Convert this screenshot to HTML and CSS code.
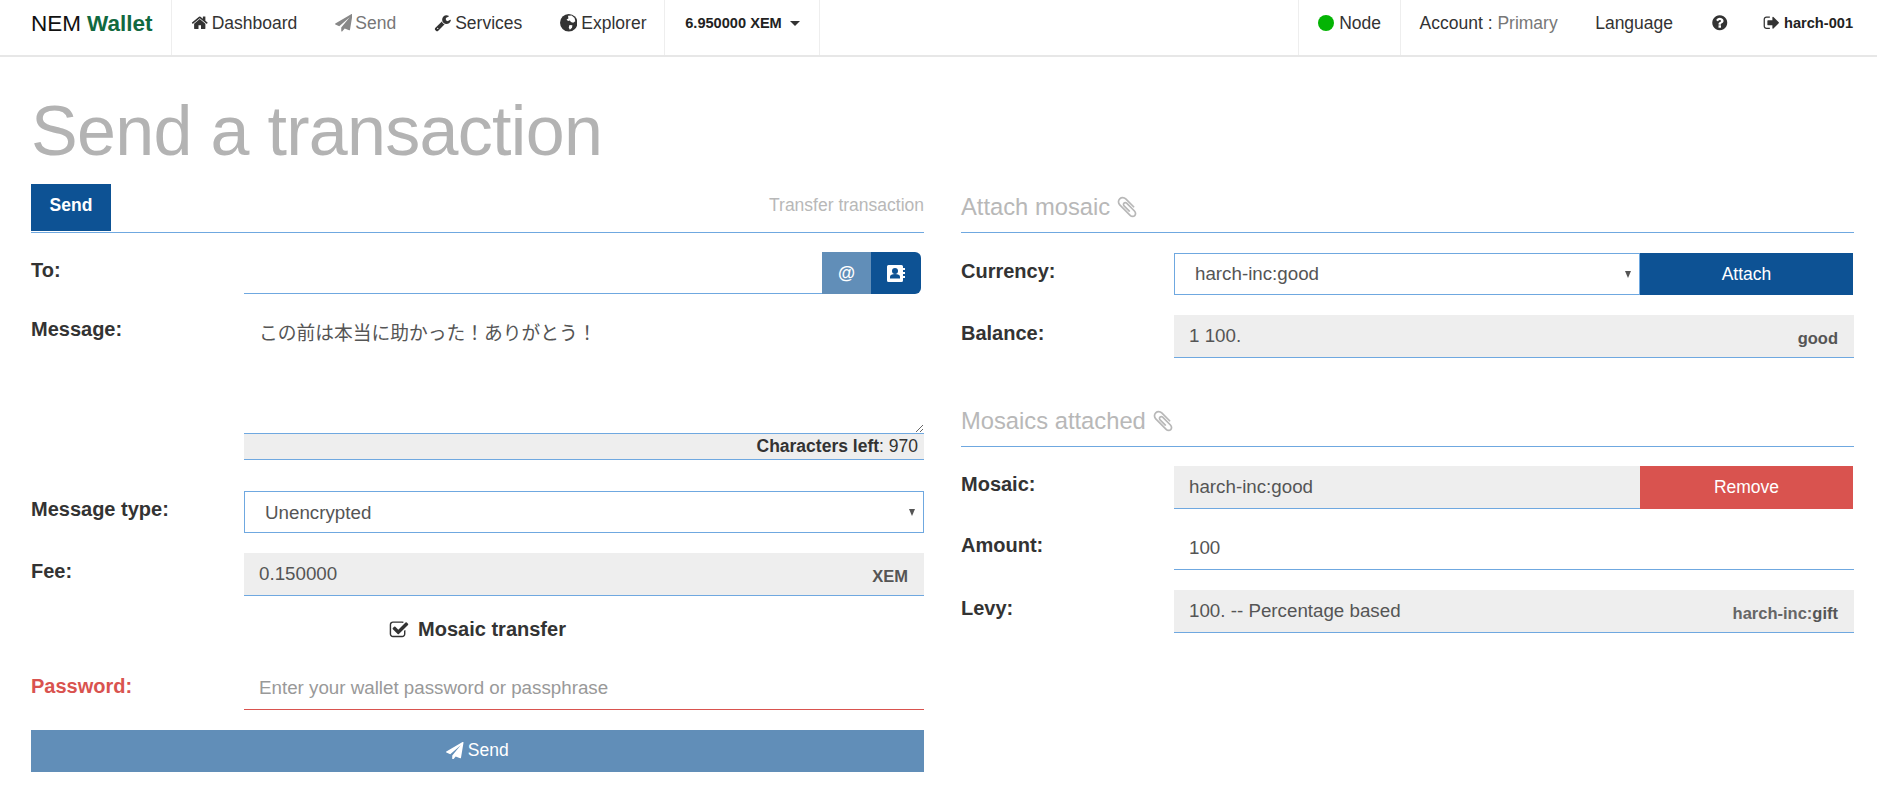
FILE: index.html
```html
<!DOCTYPE html>
<html lang="en">
<head>
<meta charset="utf-8">
<title>NEM Wallet</title>
<link rel="stylesheet" href="styles.css">
</head>
<body>
<nav class="navbar">
  <a class="brand nav-cell sep">NEM <b>Wallet</b></a>
  <a class="nav-cell"><svg class="ico" viewBox="0 0 1792 1792"><path d="M1472 992v480q0 26-19 45t-45 19h-384v-384h-256v384h-384q-26 0-45-19t-19-45v-480q0-1 .5-3t.5-3l575-474 575 474q1 2 1 6zm223-69l-62 74q-8 9-21 11h-3q-13 0-21-7l-692-577-692 577q-12 8-24 7-13-2-21-11l-62-74q-8-10-7-23.500t11-21.500l719-599q32-26 76-26t76 26l244 204v-195q0-14 9-23t23-9h192q14 0 23 9t9 23v408l219 182q10 8 11 21.500t-7 23.500z"/></svg>Dashboard</a>
  <a class="nav-cell muted"><svg class="ico" viewBox="0 0 1792 1792"><path d="M1764 11q33 24 27 64l-256 1536q-5 29-32 45-14 8-31 8-11 0-24-5l-453-185-242 295q-18 23-49 23-13 0-22-4-19-7-30.500-23.500t-11.500-36.500v-349l864-1059-1069 925-395-162q-37-14-40-55-2-40 32-59l1664-960q15-9 32-9 20 0 36 11z"/></svg>Send</a>
  <a class="nav-cell wide-gap"><svg class="ico" viewBox="0 0 1792 1792"><path d="M448 1472q0-26-19-45t-45-19-45 19-19 45 19 45 45 19 45-19 19-45zm644-420l-682 682q-37 37-90 37-52 0-91-37l-106-108q-38-36-38-90 0-53 38-91l681-681q39 98 114.500 173.500t173.500 114.500zm634-435q0 39-23 106-47 134-164.500 217.500t-258.500 83.500q-185 0-316.500-131.500t-131.500-316.500 131.500-316.500 316.500-131.500q58 0 121.500 16.500t107.500 46.500q16 11 16 28t-16 28l-293 169v224l193 107q5-3 79-48.500t135.500-81 70.500-35.500q15 0 23.500 10t8.500 25z"/></svg>Services</a>
  <a class="nav-cell sep wide-gap tight"><svg class="ico" viewBox="0 0 24 24"><circle cx="12" cy="12" r="12"/><path fill="#fff" d="M11 2.500l5-.5 4 3.500 1 4.500-3 2-3-1-1.500-2-2.500.5-2-2 2.500-1.500zM13 15l4 .5-.5 3.500-3 2.500-1.500-3z"/></svg>Explorer</a>
  <a class="nav-cell sep strong xem">6.950000 XEM<i class="caret"></i></a>
  <span class="spacer"></span>
  <a class="nav-cell sep sep-left"><i class="dot"></i>Node</a>
  <a class="nav-cell">Account :&nbsp;<span class="grey">Primary</span></a>
  <a class="nav-cell">Language</a>
  <a class="nav-cell"><svg class="ico help" viewBox="0 0 1792 1792"><path d="M1024 1376v-192q0-14-9-23t-23-9h-192q-14 0-23 9t-9 23v192q0 14 9 23t23 9h192q14 0 23-9t9-23zm256-672q0-88-55.500-163t-138.500-116-170-41q-243 0-371 213-15 24 8 42l132 100q7 6 19 6 16 0 25-12 53-68 86-92 34-24 86-24 48 0 85.500 26t37.500 59q0 38-20 61t-68 45q-63 28-115.500 86.500t-52.500 125.500v36q0 14 9 23t23 9h192q14 0 23-9t9-23q0-19 21.500-49.500t54.500-49.500q32-18 49-28.500t46-35 44.500-48 28-60.500 12.500-81zm384 192q0 209-103 385.500t-279.500 279.500-385.500 103-385.500-103-279.500-279.500-103-385.500 103-385.500 279.500-279.500 385.500-103 385.500 103 279.500 279.500 103 385.500z"/></svg></a>
  <a class="nav-cell strong last"><svg class="ico logout" viewBox="0 0 1792 1792"><path d="M704 1440q0 4 1 20t.5 26.500-3 23.500-10 19.500-20.500 6.500h-320q-119 0-203.500-84.500t-84.500-203.500v-704q0-119 84.500-203.500t203.500-84.500h320q13 0 22.500 9.500t9.500 22.500q0 4 1 20t.5 26.500-3 23.500-10 19.500-20.500 6.500h-320q-66 0-113 47t-47 113v704q0 66 47 113t113 47h312l11.500 1 11.500 3 8 5.500 7 9 2 13.500zm928-544q0 26-19 45l-544 544q-19 19-45 19t-45-19-19-45v-288h-448q-26 0-45-19t-19-45v-384q0-26 19-45t45-19h448v-288q0-26 19-45t45-19 45 19l544 544q19 19 19 45z"/></svg>harch-001</a>
</nav>

<main class="page">
  <h1 class="title">Send a transaction</h1>
  <div class="columns">
    <section class="col">
      <div class="tabs">
        <span class="tab">Send</span>
        <span class="tab-note">Transfer transaction</span>
      </div>
      <div class="row to-row">
        <label class="lbl">To:</label>
        <div class="group">
          <input class="field" type="text">
          <button class="btn-at">@</button>
          <button class="btn-book"><svg class="book" viewBox="0 0 18 17"><path fill="#fff" d="M1.500 0h13A1.500 1.500 0 0 1 16 1.500V3h2v2h-2v2h2v2h-2v2h2v2h-2v2.500a1.500 1.500 0 0 1-1.500 1.500h-13A1.500 1.500 0 0 1 0 15.500v-14A1.500 1.500 0 0 1 1.500 0z"/><circle cx="8" cy="6" r="3" fill="#0d5294"/><path fill="#0d5294" d="M3 13.500v-2C3 10 5 9 8 9s5 1 5 2.500v2z"/></svg></button>
        </div>
      </div>
      <div class="row msg-row">
        <label class="lbl">Message:</label>
        <div class="stack">
          <textarea class="area">この前は本当に助かった！ありがとう！</textarea>
          <div class="chars"><b>Characters left</b>: 970</div>
        </div>
      </div>
      <div class="row type-row">
        <label class="lbl">Message type:</label>
        <div class="select-wrap">
          <select class="sel boxed"><option>Unencrypted</option></select>
          <i class="arrow"></i>
        </div>
      </div>
      <div class="row fee-row">
        <label class="lbl">Fee:</label>
        <div class="readonly"><span>0.150000</span><b class="unit">XEM</b></div>
      </div>
      <div class="check-row"><svg class="check" viewBox="0 0 1792 1792"><path d="M1472 930v318q0 119-84.500 203.500t-203.500 84.500h-832q-119 0-203.500-84.500t-84.500-203.500v-832q0-119 84.500-203.500t203.500-84.500h832q63 0 117 25 15 7 18 23 3 17-9 29l-49 49q-10 10-23 10-3 0-9-2-23-6-45-6h-832q-66 0-113 47t-47 113v832q0 66 47 113t113 47h832q66 0 113-47t47-113v-254q0-13 9-22l64-64q10-10 23-10 6 0 12 3 20 8 20 29zm231-489l-814 814q-24 24-57 24t-57-24l-430-430q-24-24-24-57t24-57l110-110q24-24 57-24t57 24l263 263 647-647q24-24 57-24t57 24l110 110q24 24 24 57t-24 57z"/></svg><b>Mosaic transfer</b></div>
      <div class="row pass-row">
        <label class="lbl danger">Password:</label>
        <input class="field field-danger" type="password" placeholder="Enter your wallet password or passphrase">
      </div>
      <button class="btn-send"><svg class="ico white" viewBox="0 0 1792 1792"><path d="M1764 11q33 24 27 64l-256 1536q-5 29-32 45-14 8-31 8-11 0-24-5l-453-185-242 295q-18 23-49 23-13 0-22-4-19-7-30.500-23.500t-11.500-36.500v-349l864-1059-1069 925-395-162q-37-14-40-55-2-40 32-59l1664-960q15-9 32-9 20 0 36 11z"/></svg>Send</button>
    </section>

    <section class="col">
      <h2 class="head">Attach mosaic <svg class="clip" viewBox="0 0 1792 1792"><path d="M1596 1385q0 117-79 196t-196 79q-135 0-235-100l-777-776q-113-115-113-271 0-159 110-270t269-111q158 0 273 113l605 606q10 10 10 22 0 16-30.500 46.500t-46.500 30.500q-13 0-23-10l-606-607q-79-77-181-77-106 0-179 75t-73 181q0 105 76 181l776 777q63 63 145 63 64 0 106-42t42-106q0-82-63-145l-581-581q-26-24-60-24-29 0-48 19t-19 48q0 32 25 59l410 410q10 10 10 22 0 16-31 47t-47 31q-12 0-22-10l-410-410q-63-61-63-149 0-82 57-139t139-57q88 0 149 63l581 581q100 98 100 235z"/></svg></h2>
      <div class="row cur-row">
        <label class="lbl">Currency:</label>
        <div class="group">
          <div class="select-wrap grow">
            <select class="sel boxed"><option>harch-inc:good</option></select>
            <i class="arrow"></i>
          </div>
          <button class="btn-side primary">Attach</button>
        </div>
      </div>
      <div class="row bal-row">
        <label class="lbl">Balance:</label>
        <div class="readonly"><span>1 100.</span><b class="unit">good</b></div>
      </div>
      <h2 class="head head-two">Mosaics attached <svg class="clip" viewBox="0 0 1792 1792"><path d="M1596 1385q0 117-79 196t-196 79q-135 0-235-100l-777-776q-113-115-113-271 0-159 110-270t269-111q158 0 273 113l605 606q10 10 10 22 0 16-30.500 46.500t-46.500 30.500q-13 0-23-10l-606-607q-79-77-181-77-106 0-179 75t-73 181q0 105 76 181l776 777q63 63 145 63 64 0 106-42t42-106q0-82-63-145l-581-581q-26-24-60-24-29 0-48 19t-19 48q0 32 25 59l410 410q10 10 10 22 0 16-31 47t-47 31q-12 0-22-10l-410-410q-63-61-63-149 0-82 57-139t139-57q88 0 149 63l581 581q100 98 100 235z"/></svg></h2>
      <div class="row mosaic-row">
        <label class="lbl">Mosaic:</label>
        <div class="group">
          <div class="readonly grow"><span>harch-inc:good</span></div>
          <button class="btn-side danger-bg">Remove</button>
        </div>
      </div>
      <div class="row amt-row">
        <label class="lbl">Amount:</label>
        <input class="field" type="text" value="100">
      </div>
      <div class="row levy-row">
        <label class="lbl">Levy:</label>
        <div class="readonly"><span>100. -- Percentage based</span><b class="unit"><span class="unit-soft">harch-inc:</span>gift</b></div>
      </div>
    </section>
  </div>
</main>
</body>
</html>
```
FILE: styles.css
```css
* { box-sizing: border-box; }
html, body { margin: 0; padding: 0; }
body {
  font-family: "Liberation Sans", Arial, "Noto Sans CJK JP", sans-serif;
  font-size: 17.5px;
  color: #333;
  background: #fff;
  overflow: hidden;
}
b { font-weight: 700; }

/* navbar */
.navbar {
  display: flex;
  align-items: stretch;
  height: 57px;
  border-bottom: 2px solid #e7e7e7;
  background: #fff;
}
.nav-cell {
  display: flex;
  align-items: center;
  padding: 0 18.750px 9px;
  height: 55px;
  color: #333;
  white-space: nowrap;
}
.sep { border-right: 1px solid #eee; }
.sep-left { border-left: 1px solid #eee; }
.brand { padding-left: 31px; padding-right: 19px; padding-bottom: 7px; font-size: 22.5px; color: #111; }
.brand b { color: #11693f; margin-left: 6px; }
.muted { color: #777; }
.muted .ico { fill: #888; }
.strong { font-weight: 700; font-size: 14.600px; color: #222; }
.xem { padding-left: 20px; }
.grey { color: #777; }
.spacer { flex: 1; }
.last { padding-right: 24px; }
.ico { width: 17.500px; height: 17.500px; margin-right: 3px; fill: #333; flex: none; }
.wide-gap .ico { margin-right: 4px; }
.tight { padding-right: 17.750px; }
.help { margin-right: -3px; }
.logout { margin-right: 4px; }
.caret {
  margin-left: 8px;
  border-left: 5px solid transparent;
  border-right: 5px solid transparent;
  border-top: 5px solid #333;
}
.dot {
  width: 16px;
  height: 16px;
  margin-right: 5px;
  border-radius: 50%;
  background: #04b404;
}

/* page */
.page { padding: 0 23px 0 31px; }
.title {
  margin: 0;
  height: 127px;
  padding-top: 31px;
  font-size: 70px;
  letter-spacing: -0.700px;
  line-height: 86px;
  font-weight: 400;
  color: #b3b3b3;
}
.columns {
  display: grid;
  grid-template-columns: 893px 893px;
  gap: 37px;
}
.col { min-width: 0; }
.tabs {
  display: flex;
  justify-content: space-between;
  height: 49px;
  border-bottom: 1px solid #6fa8e0;
}
.tab {
  width: 80px;
  height: 47px;
  background: #0d5294;
  color: #fff;
  font-weight: 700;
  text-align: center;
  line-height: 43px;
}
.tab-note { color: #b8b8b8; line-height: 43px; }

/* rows */
.row { display: grid; grid-template-columns: 213px 1fr; }
.lbl { font-size: 20px; font-weight: 700; line-height: 24px; padding-top: 6px; color: #333; }
.danger { color: #d9534f; padding-top: 7px; }
.group { display: flex; min-width: 0; }
.grow { flex: 1; min-width: 0; }
.to-row { margin-top: 19px; }
.msg-row { margin-top: 17px; }
.type-row { margin-top: 31px; }
.fee-row { margin-top: 20px; }
.pass-row { margin-top: 0; }

.field, .area, .sel {
  font-family: "Liberation Sans", "Noto Sans CJK JP", sans-serif;
  font-size: 18.750px;
  color: #555;
  background: #fff;
  outline: none;
}
.field {
  flex: 1;
  min-width: 0;
  width: 100%;
  height: 42px;
  padding: 0 15px;
  border: 0;
  border-bottom: 1px solid #6fa8e0;
}
.field::placeholder { color: #999; opacity: 1; }
.field-danger { height: 43px; border-bottom-color: #d9534f; }
.btn-at, .btn-book {
  width: 49px;
  height: 42px;
  border: 0;
  padding: 0;
  color: #fff;
  font: 700 17.500px "Liberation Sans", sans-serif;
  background: #618eb8;
}
.btn-book {
  display: flex;
  align-items: center;
  justify-content: center;
  width: 50px;
  margin-right: 3px;
  background: #0d5294;
  border-radius: 0 6px 6px 0;
}
.book { width: 18px; height: 17px; }

.stack { min-width: 0; }
.area {
  display: block;
  width: 100%;
  height: 123px;
  padding: 10px 15px 7px;
  border: 0;
  border-bottom: 1px solid #6fa8e0;
  line-height: 26px;
  resize: vertical;
}
.chars {
  height: 26px;
  padding-right: 6px;
  background: #eee;
  border-bottom: 1px solid #6fa8e0;
  text-align: right;
  line-height: 24px;
  color: #333;
}
.select-wrap { position: relative; }
.sel {
  display: block;
  width: 100%;
  height: 42px;
  padding: 0 15px;
  appearance: none;
  border: 1px solid #6fa8e0;
  border-radius: 0;
}
.arrow {
  position: absolute;
  right: 9px;
  top: 18px;
  border-left: 3.500px solid transparent;
  border-right: 3.500px solid transparent;
  border-top: 7px solid #555;
}
.readonly {
  display: flex;
  justify-content: space-between;
  height: 43px;
  padding: 0 16px 0 15px;
  background: #eee;
  border-bottom: 1px solid #6fa8e0;
  font-size: 18.750px;
  line-height: 41px;
  color: #555;
}
.unit { font-size: 16.500px; line-height: 46px; color: #555; }
.unit-soft { color: #666; }
.check-row {
  display: flex;
  align-items: center;
  justify-content: center;
  height: 71px;
  padding-bottom: 4px;
  font-size: 20px;
  color: #333;
}
.check { width: 20px; height: 20px; margin-right: 9px; fill: #333; }
.btn-send {
  display: flex;
  align-items: center;
  justify-content: center;
  width: 100%;
  height: 42px;
  margin-top: 20px;
  padding-bottom: 2px;
  border: 0;
  background: #618eb8;
  color: #fff;
  font: 17.500px "Liberation Sans", sans-serif;
}
.btn-send .ico { margin-right: 4px; }
.white { fill: #fff; }

/* right column */
.head {
  display: flex;
  align-items: center;
  gap: 5px;
  margin: 0;
  height: 49px;
  padding-bottom: 2px;
  border-bottom: 1px solid #6fa8e0;
  font-size: 23.750px;
  font-weight: 400;
  color: #b8b8b8;
}
.clip { width: 24px; height: 24px; fill: #b8b8b8; }
.head-two { margin-top: 40px; }
.cur-row { margin-top: 20px; }
.bal-row { margin-top: 20px; }
.mosaic-row { margin-top: 19px; }
.amt-row { margin-top: 18px; }
.levy-row { margin-top: 20px; }
.btn-side {
  width: 213px;
  height: 42px;
  flex: none;
  border: 0;
  color: #fff;
  font: 17.500px "Liberation Sans", sans-serif;
}
.primary { background: #0d5294; }
.danger-bg { background: #d9534f; height: 43px; }
.cur-row .sel { padding-left: 20px; padding-bottom: 2px; }
.cur-row .group { margin-right: 1px; }
.mosaic-row .group { margin-right: 1px; }
.amt-row .field { height: 43px; }
.type-row .sel { padding-left: 20px; }
```
